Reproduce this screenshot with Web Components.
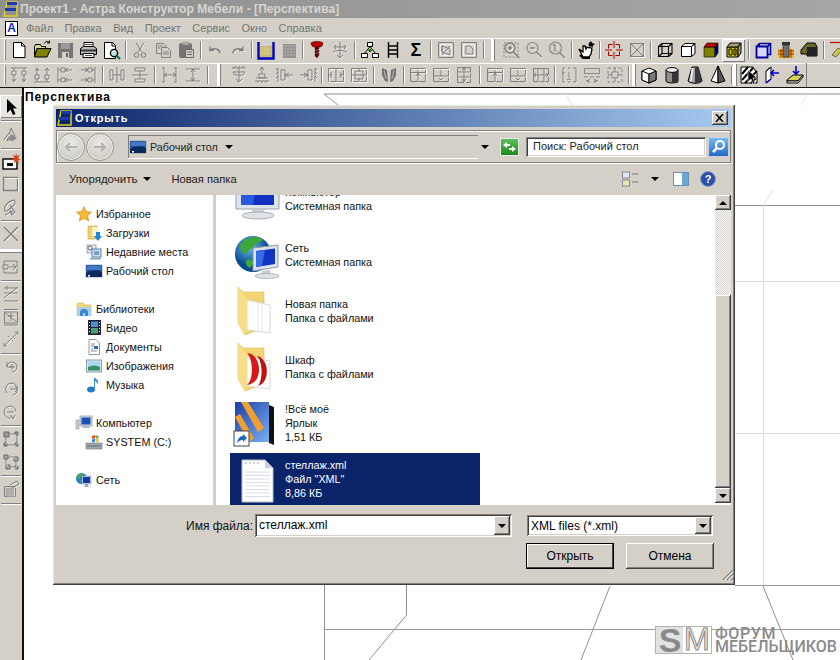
<!doctype html>
<html><head><meta charset="utf-8"><title>Астра</title>
<style>html,body{margin:0;padding:0;background:#fff}body{width:840px;height:660px;overflow:hidden;font:12px "Liberation Sans",sans-serif}</style></head>
<body><x-app></x-app>
<script>
const G='#808080';
const gs=(d,sw=1)=>`<path d="${d}" transform="translate(.8 .8)" fill="none" stroke="#f4f2ee" stroke-width="${sw}"/><path d="${d}" fill="none" stroke="#7c7c7c" stroke-width="${sw}"/>`;
const k=(d,f='none',s='#000',sw=1)=>`<path d="${d}" fill="${f}" stroke="${s}" stroke-width="${sw}"/>`;
const ICONS={
new:k('M4.5 2.5h8l3.5 3.5v11.5H4.5z','#fff')+k('M12.5 2.5V6H16'),
open:k('M2.5 6.5l1-2h5l1 2h4v2H5l-2.5 7z','#d8d88a')+k('M5 8.5h14l-4 8.5H2.5z','#808000')+k('M12 3.5c2-2.5 4-2.5 5.5-.5m0 0v-2.5m0 2.5H15'),
save:'<rect x="3" y="3" width="15" height="15" fill="#757575"/><rect x="6" y="3" width="9" height="6" fill="#9a9a9a"/><rect x="7" y="12" width="7" height="6" fill="#d4d0c8"/><rect x="11" y="13" width="2" height="4" fill="#666"/>',
print:k('M6 2.5h9v5H6z','#fff')+k('M2.5 8.5l3-2h10l3 2v6h-16z','#bcbcbc')+k('M5 13.5h11v4H5z','#fff')+k('M3 10.5h15','none','#333',2)+k('M7 4.5h7M7 15.5h7','none','#555'),
preview:k('M3.5 2.5h8l3 3v13h-11z','#fff')+k('M11 3v3h3')+'<circle cx="13" cy="13" r="3.6" fill="#bfe6e6" stroke="#000" stroke-width="1.4"/>'+k('M15.5 15.5l3.5 3.5','none','#007070',2.2),
cut:gs('M6 2.5l6 10M14 2.5l-6 10')+'<circle cx="6.5" cy="15" r="2.3" fill="none" stroke="#7c7c7c"/><circle cx="13.5" cy="15" r="2.3" fill="none" stroke="#7c7c7c"/>',
copy:k('M3.5 3.5h7l2 2v8h-9z','#d4d0c8',G)+k('M8.5 7.5h6l3 3v7h-9z','#d4d0c8',G)+k('M5 6h5M5 8h2M10 12h6M10 14h6','none',G),
paste:'<rect x="3" y="3" width="13" height="15" rx="2" fill="#757575"/><rect x="6.5" y="1.5" width="6" height="3.5" fill="#a8a8a8"/>'+k('M9.5 9.5h8v8h-8z','#d4d0c8','#666')+k('M11 12h5M11 14.5h5','none','#666'),
undo:gs('M15 13.5c0-4-5-6-9-4M5 6.5v4h4',1.4),
redo:gs('M5 13.5c0-4 5-6 9-4M15 6.5v4h-4',1.4),
bucket:'<rect x="4" y="6" width="12" height="11" fill="#bdb26a"/><path d="M4 8h12M4 10h12M4 12h12M4 14h12M6 6v11M9 6v11M12 6v11" stroke="#e0d890" stroke-width=".7"/>'+k('M2.5 2v16.5h15V2','none','#0000c0',2.4),
hatch:'<rect x="4" y="4" width="13" height="14" fill="#8a8a8a"/><path d="M4 6h13M4 9h13M4 12h13M4 15h13M6 4v14M9 4v14M12 4v14M15 4v14" stroke="#b0b0b0" stroke-width=".8"/>',
screw:'<path d="M4 3c2-2 10-2 12 0l-1 3-2 1H7L5 6z" fill="#c00000" stroke="#400000" stroke-width=".6"/><path d="M8 7h4v2l-4 1.5zM8 11l4-1v2l-4 1.5zM8 14l4-1v2l-2 3-2-2z" fill="#600" stroke="#300" stroke-width=".3"/>',
gear:gs('M10 2v16M4 7h12M6 5l-2 2 2 2M14 5l2 2-2 2M3 12c4-2 10-2 14 0M7 15l3 3 3-3')+'',
tree:k('M7.5 2.5h5v4h-5z','#e8ffe8')+k('M1.5 13.5h6v4h-6zM12.5 13.5h6v4h-6z','#fff')+k('M10 6.5L4.5 13.5M10 6.5l5.5 7')+k('M10 9l1.5 1.5L10 12l-1.5-1.5z','#00a000','#006000'),
ladder:k('M5.5 2v16M14.5 2v16M5.5 6h9M5.5 10h9M5.5 14h9','none','#000',1.4),
sigma:'<text x="10" y="16" text-anchor="middle" font-family="Liberation Sans" font-weight="bold" font-size="18">Σ</text>',
dis1:k('M2.5 2.5h15v15h-15z','#d4d0c8',G)+k('M4.5 4.5h11v11h-11z','none','#f4f2ee')+gs('M6 6l8 3v6l-8-3zM6 6v6M14 6L6 15'),
dis2:k('M2.5 2.5h15v15h-15z','#d4d0c8',G)+k('M4.5 4.5h11v11h-11z','none','#f4f2ee')+gs('M7 6h4l3 3v5H7z'),
zoomfit:'<path d="M3 3h14v14H3z" fill="none" stroke="#888" stroke-dasharray="2 1.5"/>'+'<circle cx="9" cy="8" r="5" fill="#d4d0c8" stroke="#7c7c7c" stroke-width="1.3"/>'+gs('M7 8h4M9 6v4M12.5 12l6 6',1.4),
zoomout:'<circle cx="8.5" cy="8" r="5.5" fill="none" stroke="#8a8a8a" stroke-width="1.2"/>'+gs('M6 8h5M12.5 12l5.5 5',1.3),
zoom1:'<circle cx="8.5" cy="8" r="6" fill="none" stroke="#8a8a8a" stroke-width="1.2"/>'+gs('M8 5v6M6 5h2M12.5 12.5l5.5 5.5',1.3)+k('M5.5 11h6','none','#aaa'),
hand:'<path d="M3 9l4 3V6l2 0 1 3 1-2 2 1 1-1 2 2-1 5-2 3H7z" fill="#fff" stroke="#000" stroke-width="1.3"/><path d="M13 3l2-2 1 2 3 1-2 1.500-.5 2.500-1.500-2-2.500 0z" fill="#000"/><path d="M4 15l3 3h7" stroke="#000" stroke-width="2" fill="none"/>',
target:k('M4.500 4.500h4M11.500 4.500h4M4.500 15.500h4M11.500 15.500h4M4.500 4.500v4M15.500 4.500v4M4.500 11.500v4M15.500 11.500v4','none','#a00000')+k('M10 1v7M10 12v7M1 10h7M12 10h7','none','#c00000'),
boxx:k('M3.500 3.500h13v13h-13z','#d4d0c8',G)+k('M3.500 3.500l13 13M16.500 3.500l-13 13','none',G)+k('M4.500 17.500h13v-13','none','#f4f2ee'),
cube1:k('M3.500 6.500h10v10h-10zM7 3.500h10v10H7zM3.500 6.500L7 3.500M13.500 6.500l3.500-3M13.500 16.500l3.500-3M3.500 16.500l3.500-3','none','#000',1.1),
cube2:k('M3.500 6.500h10v10h-10z','#fff')+k('M3.500 6.500L7 3.500h10l-3.500 3zM13.500 6.500l3.500-3v10l-3.500 3z','#fff'),
cube3:'<path d="M3 7h11v10H3z" fill="#808000" stroke="#000" stroke-width=".6"/><path d="M3 7l3-4h11l-3 4z" fill="#c00000" stroke="#000" stroke-width=".6"/><path d="M14 7l3-4v10l-3 4z" fill="#000090" stroke="#000" stroke-width=".6"/>',
cube4:'<path d="M3 7h11v10H3z" fill="#d8c820" stroke="#000"/><path d="M3 7l3-4h11l-3 4zM14 7l3-4v10l-3 4z" fill="#a8a070" stroke="#000"/><path d="M5 9h3v6H5zM10 9h2v6h-2z" fill="none" stroke="#000"/>',
cube5:k('M3.500 6.500h11v11h-11z','#d8d8ff','#0000a0',1.8)+k('M6.500 3.500h11v11h-3M6.500 3.500l-3 3M17.500 3.500l-3 3','none','#0000a0',1.6)+k('M6.500 3.500v3','none','#000'),
hole:'<rect x="2" y="9" width="16" height="9" fill="#e0c020"/><path d="M2 11h16M2 14h16M5 9v9M8 9v9M12 9v9M15 9v9" stroke="#c00000" stroke-width=".8"/><rect x="7" y="5" width="6" height="12" fill="#707070" stroke="#000" stroke-width=".5"/><rect x="6" y="2" width="8" height="3" fill="#333"/>',
darkbox:'<path d="M2 10l6-7h8l2 4v9H8v-2H2z" fill="#6a6a30" stroke="#000"/><path d="M8 7h10v9H8z" fill="#222"/>',
pencil:k('M2 2.500h14','none','#c00000',1.200)+'<path d="M4 15l6-7 4 2-6 7z" fill="#c8c84a" stroke="#666"/>',
a1:gs('M2 3h16M5 3v3M15 3v3M3 6h4v4H3zM13 6h4v4h-4zM5 10v7M15 10v7M3 14l2 3 2-3M13 14l2 3 2-3'),
a2:gs('M2 17h16M5 17v-3M15 17v-3M3 10h4v4H3zM13 10h4v4h-4zM5 10V3M15 10V3M3 6l2-3 2 3M13 6l2-3 2 3'),
a3:gs('M3 2v16M3 5h3M3 15h3M6 3h4v4H6zM6 13h4v4H6zM10 5h7M10 15h7M13 3l-3 2 3 2M13 13l-3 2 3 2'),
a4:gs('M17 2v16M14 5h3M14 15h3M10 3h4v4h-4zM10 13h4v4h-4zM3 5h7M3 15h7M7 3l3 2-3 2M7 13l3 2-3 2'),
a5:gs('M10 2v16M6 5h-3v10h3zM14 5h3v10h-3zM6 10h4M10 10h4'),
a6:gs('M2 10h16M5 6V3h10v3zM5 14v3h10v-3zM10 6v4M10 10v4'),
a7:gs('M4 3v14M16 3v14M4 10h12M2 3h3M2 17h3M14 3h3M14 17h3M7 8l-3 2 3 2M13 8l3 2-3 2'),
a8:gs('M3 4h14M3 16h14M10 4v12M8 7l2-3 2 3M8 13l2 3 2-3'),
b1:gs('M3 3h14M5 3l2-2M9 3l2-2M13 3l2-2M10 3v6M4 7h12l-2 3H6zM10 10v7M7 14l3 3 3-3'),
b2:gs('M3 16h14M5 18l2-2M9 18l2-2M13 18l2-2M7 9h6v4H7zM10 9V2M8 5l2-3 2 3M4 13h12'),
b3:gs('M3 3v14M1 5l2-2M1 9l2-2M1 13l2-2M6 5h4v10H6zM10 10h8M14 8l-4 2 4 2'),
b4:gs('M17 3v14M19 5l-2-2M19 9l-2-2M19 13l-2-2M10 5h4v10h-4zM2 10h8M6 8l4 2-4 2'),
c1:k('M2.500 3.500h15v13h-15z','none',G)+k('M3.500 4.500h15v13h-15z','none','#f4f2ee')+gs('M10 3v14M5 7v6M15 7v6M3 10h3M14 10h3'),
c2:k('M2.500 3.500h15v13h-15z','none',G)+k('M3.500 4.500h15v13h-15z','none','#f4f2ee')+gs('M3 10h14M6 6h8v8H6zM10 3v4M10 13v4'),
wings:'<path d="M3 3l5 2 1 12-3-1-3-6zM17 3l-5 2-1 12 3-1 3-6z" fill="#707070"/><path d="M5 5l2 9M15 5l-2 9" stroke="#bbb"/>',
d1:k('M2.500 3.500h15v13h-15z','none',G)+gs('M3 7.500h14M10 3v13M8 11l2-3 2 3')+k('M3.500 4.500h15v13','none','#f4f2ee'),
d2:k('M2.500 3.500h15v13h-15z','none',G)+gs('M3 11h14M10 4v7M8 13l2 2 2-2')+k('M3.500 4.500h15v13','none','#f4f2ee'),
d3:k('M3.500 2.500h13v15h-13z','none',G)+gs('M3 7h13M3 12h13M10 3v14M8 5l2-2 2 2M8 14l2 3 2-3'),
e1:k('M2.500 3.500h15v13h-15z','none',G)+gs('M8 4v12M14 7v6M3 10h5M12 10l-2-2M10 10h4'),
e2:k('M2.500 3.500h15v13h-15z','none',G)+gs('M12 4v12M6 7v6M17 10h-5M8 10h-3M10 8l2 2-2 2'),
e3:k('M2.500 3.500h15v13h-15z','none',G)+gs('M7 4v12M13 4v12M3 10h14M5 8l-2 2 2 2M15 8l2 2-2 2'),
f1:gs('M6 3h-2v14h2M14 3h3v14h-3M3 8h3M9 3h2v1M9 17h2v-1M10 7v6M8 15l2-1 2 1'),
f2:k('M2.500 3.500h15v5h-15z','none',G,.9)+gs('M2 12h4M14 12h4M8 12h4M4 16h4M12 16h4M8 14l-3 2 3 2M12 14l3 2-3 2'),
f3:'<path d="M3 3h14v14H3z" fill="none" stroke="#888" stroke-dasharray="3 2"/>'+gs('M7 7h6v6H7zM10 3v4M10 13v4M3 10h4M13 10h4'),
g1:k('M3 6l7-3 7 3v9l-7 3-7-3z','#fff')+'<path d="M3 6l7 3v9l-7-3z" fill="#fff" stroke="#000"/><path d="M17 6l-7 3v9l7-3z" fill="#7a7a7a" stroke="#000"/>',
g2:'<path d="M4 5v11c0 2.600 12 2.600 12 0V5z" fill="#909090" stroke="#000"/><path d="M10 6v12h6V6z" fill="#333"/><ellipse cx="10" cy="5" rx="6" ry="2.400" fill="#eee" stroke="#000"/>',
g3:'<path d="M7 2h6l4 14c-2 3-12 3-14 0z" fill="#a0a0a0" stroke="#000"/><path d="M10 2h3l4 14c-1 1.500-4 2-7 2z" fill="#3a3a3a"/><path d="M7.500 3L6 16" stroke="#eee" stroke-width="2"/>',
g4:k('M10 1L3 16l7 2z','#fff')+k('M10 1l7 15-7 2z','#555'),
h1:'<path d="M2 2h12l4 6v10H2z" fill="#fff" stroke="#000"/><path d="M3 9l6-7M3 15L14 3M6 18L18 6M12 18l6-6" stroke="#000" stroke-width="2"/><path d="M9 5l9 8-4 0 2 5-2 1-2-5-3 3z" fill="#000" stroke="#fff" stroke-width=".6"/>',
h2:k('M4 18V6l5-4v12z','#fff')+k('M4 18l5-4M9 8h8M12 5l-3 3 3 3','none','#0000d0',1.6)+k('M4 6l5-4'),
h3:'<path d="M2 15l6-5h10l-5 6H2z" fill="#d8d060" stroke="#000"/><path d="M2 16h11l5-6v2l-5 6H2z" fill="#fff" stroke="#000"/><path d="M11 1v8M8 6l3 3 3-3" fill="none" stroke="#0000d0" stroke-width="1.600"/>',
cursor:'<path d="M6 2v14l3.500-3.500 2.500 5.500 2.500-1-2.500-5.500H16z" fill="#000"/>',
l1:k('M6 17l4-13 4 8-5 1z','none',G)+'<path d="M10 10l6 4-4 3-5-1z" fill="#8a8a8a"/>'+gs('M3 16l5-7'),
l2:'<rect x="2" y="7" width="14" height="10" fill="#fff" stroke="#000" stroke-width="1.400"/><path d="M15 1l1 3 3-1-2 3 3 2-3 .5 1 3-3-2-2 2 .5-3-3-.5 3-2-2-3 3 1z" fill="#e04020"/><rect x="6" y="11" width="6" height="3" fill="#000"/>',
l3:k('M2.500 3.500h14v13h-14z','none',G,1.300)+k('M3.500 4.500h14v13','none','#f4f2ee'),
l4:gs('M4 14c-2-4 3-10 9-11 2 2 1 5-1 6-4 3-5 6-8 5zM9 8l5 7-3 3-2-5M4 18l8-4',1.100),
l5:gs('M3 3l14 14M17 3L3 17',1.400),
l6:k('M3 4h13v12H3z','none',G)+gs('M8 10h7M12 7l3 3-3 3M2 8h5v4H2z'),
l7:gs('M3 4h14M3 9h14M3 14l14-11M3 17h14M6 2v4',1),
l8:k('M3.500 5h13v11h-13z','none',G)+gs('M3 2.500h14M3 18h14M7 9h6M10 6v8M3 5l14 11'),
l9:gs('M3 17l14-14M14 3h3v3M3 14v3h3M7 7l1 1M11 11l1 1M13 9l1 1',1),
l10:gs('M6 10a5 5 0 1 1 5 5M6 5v5h5M11 7v6M8 10h6'),
l11:gs('M6 14a6 6 0 1 1 6 2M9 10h8M14 7l3 3-3 3'),
l12:gs('M15 9a6 6 0 1 0-5 7M6 10h7M10 13l2 4 2-4'),
l13:k('M3 3h5v5H3zM14 3h3v3h-3zM3 14h3v3H3zM14 14h3v3h-3z','#999','#666')+gs('M8 5h6M5 8v6M16 6v8M6 16h8'),
l14:k('M3 3h4v4H3zM13 5h4v4h-4zM5 13h4v4H5zM14 14h3v3h-3z','#aaa','#666')+gs('M7 5h6M5 7v6M15 9v5M9 15h5'),
l15:k('M3.500 7.500h11v10h-11z','#d4d0c8',G)+gs('M5 10h8M5 12h8M5 14h8M5 16h8M9 6l7-4 2 3-7 4')
};
const SM={
star:'<path d="M8 .8l2.200 4.800 5.300.6-4 3.500 1.200 5.300L8 12.200 3.300 15l1.200-5.300-4-3.500 5.300-.6z" fill="#f6b93a" stroke="#d88a10" stroke-width=".7"/>',
dl:'<path d="M2 1h9v13H2z" fill="#f0d070" stroke="#c8a040" stroke-width=".6"/><path d="M6 2h6v9H6z" fill="#fff3c0"/><path d="M10 7h4v4h2l-4 5-4-5h2z" fill="#1e88d8"/>',
recent:'<rect x="1" y="1" width="9" height="8" fill="#e4e8ec" stroke="#7a8a9a" stroke-width=".7"/><circle cx="4" cy="4" r="2" fill="#fff" stroke="#667"/><rect x="6" y="5" width="9" height="8" fill="#cfe0f0" stroke="#5a80a0"/><rect x="8" y="7" width="5" height="4" fill="#70a0c8"/><path d="M4 14h11v1.500H4z" fill="#90a0b0"/>',
desk:'<rect x="0" y="2" width="16" height="12" fill="#1c4d9a" stroke="#6a84a8" stroke-width=".6"/><path d="M0 10c5-3 11-3 16-1v5H0z" fill="#0a2a60"/><rect x="1" y="3" width="14" height="4" fill="#5a9ae0" opacity=".6"/><rect x="2" y="12" width="2" height="1.500" fill="#fff"/>',
lib:'<path d="M1 4l1-2h5l1 2h7v10H1z" fill="#f4d878" stroke="#d0a840" stroke-width=".6"/><path d="M1 6h14v9H1z" fill="#a8cef0"/><path d="M4 15V11c0-4 8-4 8 0v4h-3v-3H7v3z" fill="#3a88d0"/>',
video:'<rect x="2" y="0" width="13" height="15" fill="#223"/><rect x="5" y="1.500" width="7" height="5.500" fill="#4a90d8"/><rect x="5" y="8" width="7" height="5.500" fill="#4aa070"/><path d="M3 2h1v1H3zM3 5h1v1H3zM3 8h1v1H3zM3 11h1v1H3zM13 2h1v1h-1zM13 5h1v1h-1zM13 8h1v1h-1zM13 11h1v1h-1z" fill="#fff"/>',
docs:'<path d="M3 .5h7l3.500 3.500v11.500H3z" fill="#fff" stroke="#8a9ab0"/><path d="M5 5h4M5 7h3M5 12h6M5 10h2" stroke="#889" /><rect x="8" y="7" width="4" height="3" fill="#2a70c0"/>',
img:'<rect x=".5" y="2" width="15" height="12" fill="#d8e8f4" stroke="#8a9ab0"/><rect x="2" y="3.500" width="12" height="9" fill="#a8d8f0"/><path d="M2 9c4-2 8-2 12 0v3.500H2z" fill="#3a9060"/>',
music:'<ellipse cx="5" cy="12.500" rx="4" ry="3" fill="#2878c8"/><path d="M8 12V.5c3 1.500 5 3.500 4 7-.5-2-2-3-3-3.500V12z" fill="#3a90e0"/>',
comp:'<rect x="4" y="1" width="12" height="10" fill="#cfd8e0" stroke="#7a8a9a" stroke-width=".6"/><rect x="5.500" y="2.500" width="9" height="7" fill="#1c50b8"/><path d="M7 11h6l1 2h-8z" fill="#b0b8c0"/><rect x="0" y="5" width="3" height="9" fill="#c8ccd0" stroke="#889" stroke-width=".5"/>',
drive:'<rect x="0" y="9" width="16" height="6" fill="#a0a8b0" stroke="#707880" stroke-width=".6"/><path d="M1 12h14" stroke="#606870"/><path d="M6 2l3-1v3l-3 1z" fill="#e05030"/><path d="M9.500 1l3 1v3l-3-1z" fill="#60b040"/><path d="M6 5.500l3-1v3l-3 1z" fill="#3080e0"/><path d="M9.500 4.500l3 1v3l-3-1z" fill="#f0c020"/>',
net:'<circle cx="5.500" cy="6.500" r="5.500" fill="#2a80c8"/><path d="M1 4c2-3 6-3 6-1s-3 1-3 3-3 1-3-2zM4 9c2-1 3 0 2 2z" fill="#4aa848"/><rect x="6" y="4" width="9" height="8" fill="#cfd8e8" stroke="#6a7a90" stroke-width=".5"/><rect x="7" y="5" width="7" height="6" fill="#1438a8"/><path d="M9 12h3l.5 3h-4z" fill="#a0a8b0"/>'
};
const BIG={
comp:'<path d="M2 -6h43v40H2z" fill="#dfe4ea" stroke="#98a0ac"/><path d="M7 -6h33v36H7z" fill="#1030c0"/><path d="M7 -6h18l-6 36H7z" fill="#2a58e0"/><path d="M19 34h10l2 4H17z" fill="#c8ccd2"/><ellipse cx="24" cy="40.500" rx="16" ry="3.500" fill="#dfe2e6" stroke="#a8aeb6"/>',
net:'<defs><radialGradient id="gl" cx=".4" cy=".3"><stop offset="0" stop-color="#6ac0f0"/><stop offset="1" stop-color="#084a90"/></radialGradient></defs><circle cx="19" cy="23" r="18" fill="url(#gl)"/><path d="M6 14c5-8 18-10 22-6 2 3-6 3-8 7s-5 2-6 6-8 2-8-7zM12 30c4-3 8-1 7 3l-3 4c-3-1-5-4-4-7z" fill="#3ca83c"/><path d="M19 17l25-3v22l-25 4z" fill="#dbe2ea" stroke="#8a98a8"/><path d="M22 20l19-2.500V33l-19 3z" fill="#0e34c0"/><path d="M22 20l9-1-3 16-6 1z" fill="#3a6ae8"/><path d="M28 40l8-1 1 4H27z" fill="#c8ccd2"/><ellipse cx="33" cy="45" rx="12" ry="2.500" fill="#dfe2e6" stroke="#b0b6bc"/>',
folder:'<path d="M4 0l5 5h21v36l-19 7-7-12z" fill="#f2d676" stroke="#d8b850" stroke-width=".6"/><path d="M13 13l23 5v28l-23-3z" fill="#fff" stroke="#d8d8d8"/><path d="M24 15v30M28 16v29" stroke="#e4e4e4"/><path d="M4 0l9 13v30l-2 5-7-12z" fill="#f6de8a"/>',
folderR:'<path d="M4 0l5 5h21v36l-19 7-7-12z" fill="#f2d676" stroke="#d8b850" stroke-width=".6"/><path d="M13 13l23 5v28l-23-3z" fill="#fff" stroke="#d8d8d8"/><path d="M4 0l9 13v30l-2 5-7-12z" fill="#f6de8a"/><path d="M13 10c14 0 18 30 0 32 7-6 6-26 0-32z" fill="#d81818"/><path d="M23 13c12 2 14 26 1 30 5-6 5-24-1-30z" fill="#c01010"/>',
link:'<defs><linearGradient id="lk" x1="0" x2="1" y1="0" y2="1"><stop offset="0" stop-color="#1a3ea8"/><stop offset="1" stop-color="#7ab0f0"/></linearGradient></defs><path d="M35 6l5 2v38l-5-2z" fill="#111"/><path d="M1 3h34v40H1z" fill="url(#lk)"/><path d="M7 3h7l16 26-6 4zM1 18l5-3 14 24-5 4z" fill="#f0a030"/><rect x="0" y="32" width="15" height="15" fill="#fff" stroke="#445"/><path d="M3 44c1-5 3-7 6-7v-2l4 4-4 4v-2c-3 0-4 1-6 3z" fill="#1a68c0"/>',
xml:'<path d="M8 5h23l8 8v34H8z" fill="#fff" stroke="#b8c0cc"/><path d="M31 5v8h8z" fill="#c8d0dc"/><path d="M11 17h25M11 20.500h25M11 24h25M11 27.500h25M11 31h25M11 34.500h25M11 38h25M11 41.500h25" stroke="#ccd6e4" stroke-width=".8"/><path d="M11 8h2M15 8h2M19 8h2M23 8h2" stroke="#99a"/>'
};
function def(name,fn){customElements.define(name,class extends HTMLElement{
  connectedCallback(){if(this.shadowRoot)return;const s=this.attachShadow({mode:'open'});s.innerHTML=fn(this)}})}
const raised='box-shadow:inset -1px -1px #404040,inset 1px 1px #fff,inset -2px -2px #808080;background:#d4d0c8';
const sunken='box-shadow:inset 1px 1px #808080,inset -1px -1px #fff,inset 2px 2px #404040,inset -2px -2px #d4d0c8;background:#fff';

def('x-ic',e=>{const n=e.getAttribute('n'),act=e.hasAttribute('on');
  return `<style>:host{display:flex;width:${e.getAttribute('w')||23}px;height:${e.getAttribute('h')||23}px;align-items:center;justify-content:center;flex:none}svg{display:block;overflow:visible}
  ${act?':host{box-shadow:inset 1px 1px #fff,inset -1px -1px #808080;background:#e8e6e0}':''}</style><svg width="20" height="20" viewBox="0 0 20 20">${ICONS[n]||''}</svg>`});
def('x-small',e=>`<style>:host{display:block;width:16px;height:16px;flex:none}svg{display:block;overflow:visible}</style><svg width="16" height="16" viewBox="0 0 16 16">${SM[e.getAttribute('n')]}</svg>`);
def('x-big',e=>`<style>:host{display:block;width:48px;height:48px;flex:none}svg{display:block;overflow:visible}</style><svg width="48" height="48" viewBox="0 0 48 48">${BIG[e.getAttribute('n')]}</svg>`);
def('x-caret',e=>{const c=e.getAttribute('dir')||'down';return `<style>:host{display:block;flex:none;width:0;height:0;border:4px solid transparent;${c=='down'?'border-top:4px solid #000;border-bottom:0':'border-bottom:4px solid #000;border-top:0'}}</style>`});

def('x-titlebar',e=>`<style>:host{display:flex;height:18px;align-items:center;background:linear-gradient(90deg,#8f8f8f,#a6a6a6);color:#d8d6d0;font:bold 12px "Liberation Sans",sans-serif;letter-spacing:.06px;white-space:nowrap;flex:none}
 svg{margin:0 2px 0 3px}</style><svg width="15" height="16" viewBox="0 0 15 16"><path d="M4 1h10v14H1z" fill="none" stroke="#e0d020" stroke-width="1.500"/><path d="M2 7h11v3H2z" fill="#1a3ab0"/><path d="M4 1h10v3H4z" fill="#1a3ab0"/></svg><slot></slot>`);
def('x-menubar',e=>`<style>:host{display:flex;height:20px;align-items:center;background:#d4d0c8;color:#77756f;font:11px "Liberation Sans",sans-serif;flex:none;padding-left:5px;box-sizing:border-box}
 .lg{width:13px;height:15px;background:#fff;border:1px solid #000;box-sizing:border-box;color:#1a2ac0;font:bold 12px/13px "Liberation Sans";text-align:center;margin-right:8px}
 ::slotted(span){margin-right:11.500px}</style><div class="lg">A</div><slot></slot>`);
def('x-sep',e=>{const w=e.getAttribute('w')||6;return `<style>:host{display:flex;justify-content:center;width:${w}px;flex:none;align-self:stretch}i{display:block;width:1px;margin:3px 0;background:#808080;box-shadow:1px 0 #fff}</style><i></i>`});
def('x-grip',e=>`<style>:host{display:flex;width:${e.getAttribute('w')||8}px;flex:none;align-self:stretch;justify-content:center}i{display:block;width:1px;background:#808080;border-left:3px solid #fff;margin:1px 0}</style><i></i>`);
def('x-toolbar',e=>{const t=e.getAttribute('items').trim().split(/\s+/);
  const html=t.map(x=>x[0]=='|'?`<x-sep w="${x.slice(1)||6}"></x-sep>`:x[0]=='#'?`<x-grip w="${x.slice(1)}"></x-grip>`:x[0]=='*'?`<x-ic n="${x.slice(1)}" on></x-ic>`:`<x-ic n="${x}"></x-ic>`).join('');
  return `<style>:host{display:block;flex:none;height:24px;background:#d4d0c8;overflow:hidden}
  .r{display:flex;align-items:center;height:24px;padding-left:7px;box-sizing:border-box;box-shadow:inset 0 1px #fff;position:relative}
  .r:before{content:"";position:absolute;left:5px;top:2px;bottom:2px;width:1px;background:#808080;box-shadow:-1px 0 #fff}
  .e{position:absolute;left:${e.getAttribute('end')||9999}px;top:0;bottom:0;width:1px;background:#808080}</style><div class="r">${html}<div class="e"></div></div>`});
def('x-lefttools',e=>{const t=e.getAttribute('items').trim().split(/\s+/);
  const html=t.map(x=>x[0]=='|'?`<div class="s"></div>`:x=='#'?`<div class="g"></div>`:x[0]=='*'?`<x-ic n="${x.slice(1)}" h="23" w="22" on></x-ic>`:`<x-ic n="${x}" w="22" h="22.500"></x-ic>`).join('');
  return `<style>:host{display:flex;flex-direction:column;width:24px;flex:none;background:#d4d0c8;box-sizing:border-box;border-right:2px solid #111;padding-top:7px}
  .s{height:1px;background:#808080;box-shadow:0 1px #fff;margin:2px 1px 2px}.g{height:3px;background:#fff;border-bottom:1px solid #808080;margin:3px 0 3px}</style>${html}`});
def('x-canvas',e=>`<style>:host{display:block;position:relative;flex:1;background:#fff;overflow:hidden}
  .t{font:bold 12px "Liberation Sans",sans-serif;letter-spacing:.85px;color:#000;padding:2px 0 0 1px}svg{position:absolute;left:0;top:0}</style>
  <svg width="816" height="572" viewBox="24 88 816 572"><g fill="none" stroke-width="1">
  <path d="M324 94H840" stroke="#8f8f8f"/><path d="M324 94L338 105" stroke="#9a9a9a"/><path d="M565 94l7 11M808 94l-8 11" stroke="#e4e4e4"/>
  <path d="M735 205.500H840" stroke="#8f8f8f"/><path d="M735 281.500H840M735 433.500H840M763.500 205V586" stroke="#dcdcdc"/><path d="M763 205l10-15" stroke="#e6e6e6"/>
  <path d="M735 585.500H840" stroke="#999"/><path d="M324.500 585V660M406.500 585V615M406.500 615L369 660M610 586L581 660M763 586L793 660" stroke="#8f8f8f"/><path d="M324 629.500H840" stroke="#999"/></g></svg>
  <div class="t">Перспектива</div><slot></slot>`);
def('x-logo',e=>`<style>:host{position:absolute;left:631px;top:538px;display:flex;color:#8b8b8b;align-items:flex-start}
  .m{width:57px;height:28px;display:flex;box-sizing:border-box;border:1px solid #b4b4b4;background:linear-gradient(90deg,#e2e2e2 50%,#fff 50%);font:bold 34px/26px "Liberation Sans";overflow:visible}
  .s{color:#8a8a8a;width:28px;text-align:center}.n{font-size:31px;font-weight:400;color:#e8e8e8;-webkit-text-stroke:1px #8a8a8a}
  .x{font:500 16px/13px Roboto,"Liberation Sans";margin-left:3px;padding-top:1px}.x div:first-child{letter-spacing:.6px}</style>
  <div class="m"><span class="s">S</span><span class="n">M</span></div><div class="x"><div>ФОРУМ</div><div>МЕБЕЛЬЩИКОВ</div></div>`);
def('x-winbtn',e=>`<style>:host{display:flex;align-items:center;justify-content:center;width:${e.getAttribute('w')||16}px;height:${e.getAttribute('h')||15}px;flex:none;${raised}}</style><slot></slot>`);
def('x-combo',e=>`<style>:host{display:flex;box-sizing:border-box;width:${e.getAttribute('w')}px;height:${e.getAttribute('h')||22}px;${sunken};padding:2px;align-items:stretch;font-size:12px;color:#000;flex:none}
  .v{flex:1;padding:1px 2px;white-space:nowrap;line-height:17px}.b{width:16px;display:flex;align-items:center;justify-content:center;${raised}}</style><div class="v"><slot></slot></div><div class="b"><x-caret></x-caret></div>`);
def('x-button',e=>`<style>:host{display:flex;align-items:center;justify-content:center;box-sizing:border-box;width:88px;height:26px;flex:none;${e.hasAttribute('def')?'box-shadow:inset 0 0 0 1px #000,inset -2px -2px #404040,inset 2px 2px #fff;background:#d4d0c8':raised};color:#000}</style><slot></slot>`);
def('x-tree-row',e=>`<style>:host{display:flex;align-items:center;gap:4px;height:19px;padding-left:${e.hasAttribute('sub')?30:20}px;white-space:nowrap;color:#111;font-size:10.800px}</style><x-small n="${e.getAttribute('i')}"></x-small><slot></slot>`);
def('x-tree',e=>`<style>:host{display:block;width:157px;flex:none;background:#fff;padding-top:9px;box-sizing:border-box;overflow:hidden}::slotted(.gap){height:19px}</style><slot></slot>`);
def('x-file',e=>{const sel=e.hasAttribute('sel');return `<style>:host{display:flex;box-sizing:border-box;height:52px;margin:2px 0;width:250px;align-items:center;padding-left:4px;gap:3px;flex:none;font-size:10.800px;${sel?'background:#0a246a;color:#fff':'color:#111'}}
  .t{line-height:14px;white-space:nowrap}</style><x-big n="${e.getAttribute('i')}"></x-big><div class="t"><slot></slot></div>`});
def('x-filelist',e=>`<style>:host{display:block;flex:1;background:#fff;overflow:hidden;padding-left:14px;min-width:0}.in{margin-top:-24px;display:flex;flex-direction:column}</style><div class="in"><slot></slot></div>`);
def('x-scroll',e=>`<style>:host{display:flex;flex-direction:column;width:16px;flex:none;background:#fff}
  .t{height:85px;background:repeating-conic-gradient(#d4d0c8 0 25%,#fff 0 50%) 0 0/2px 2px}.th{height:193px;${raised}}
  .sp{height:2px;background:#fff}</style><x-winbtn><x-caret dir="up"></x-caret></x-winbtn><div class="t"></div><div class="th"></div><x-winbtn><x-caret></x-caret></x-winbtn>`);
def('x-nav',e=>`<style>:host{display:flex;align-items:center;height:33px;margin-top:3px;box-sizing:border-box;flex:none;box-shadow:inset 0 0 0 1px #808080,inset 1px 1px #808080,inset 2px 2px #fff,0 1px #fff;color:#222}
  .c{width:28px;height:28px;margin-left:1px;border-radius:50%;box-sizing:border-box;border:1px solid #9a9890;background:radial-gradient(circle at 50% 35%,#eceae6,#c4c2bc);display:flex;align-items:center;justify-content:center;color:#bbb;box-shadow:inset 0 0 0 1px #f4f2ee}
  .c:first-child{margin-left:3px}
  .ad{display:flex;align-items:center;width:350px;height:23px;margin-left:14px;box-sizing:border-box;padding-left:2px;gap:4px;box-shadow:inset 1px 1px #808080,0 1px #fff;flex:none;white-space:nowrap;font-size:10.800px}
  .ad x-caret{margin-left:3px}.cr{margin-left:3px}
  .gr{width:19px;height:18px;margin-left:11px;background:linear-gradient(#5cc05c,#1a8a1a);border:1px solid #e8e8e8;box-sizing:border-box;flex:none;display:flex;align-items:center;justify-content:center}
  .sr{width:180px;height:20px;margin-left:7px;box-sizing:border-box;${sunken};padding-left:7px;line-height:19px;flex:none;color:#222;white-space:nowrap;font-size:11px}
  .go{width:21px;height:20px;margin-left:2px;background:linear-gradient(#7ab8f0,#2468c8);border:1px solid #c8d4e4;box-sizing:border-box;display:flex;align-items:center;justify-content:center;flex:none}</style>
  <div class="c"><svg width="14" height="10" viewBox="0 0 14 10"><path d="M13 5H2M6 1L2 5l4 4" fill="none" stroke="#b4b2ac" stroke-width="2"/></svg></div><div class="c"><svg width="14" height="10" viewBox="0 0 14 10"><path d="M1 5h11M8 1l4 4-4 4" fill="none" stroke="#b4b2ac" stroke-width="2"/></svg></div>
  <div class="ad"><x-small n="desk"></x-small><span>Рабочий стол</span><x-caret></x-caret></div><x-caret class="cr"></x-caret>
  <div class="gr"><svg width="15" height="12" viewBox="0 0 15 12"><path d="M1 4l4-3v2h3v2H5v2zM14 8l-4 3V9H7V7h3V5z" fill="#fff"/></svg></div>
  <div class="sr">Поиск: Рабочий стол</div>
  <div class="go"><svg width="15" height="15" viewBox="0 0 15 15"><circle cx="9" cy="6" r="4" fill="none" stroke="#fff" stroke-width="2"/><path d="M6 9l-4 4" stroke="#fff" stroke-width="2.500"/></svg></div>`);
def('x-dtools',e=>`<style>:host{display:flex;align-items:center;height:32px;flex:none;color:#222;white-space:nowrap}
  .a{margin-left:13px}x-caret{margin-left:6px}.b{margin-left:20px;font-size:11.200px}.sp{flex:1}
  .vw{display:flex;align-items:center;margin-right:15px}</style>
  <span class="a">Упорядочить</span><x-caret></x-caret><span class="b">Новая папка</span><span class="sp"></span>
  <div class="vw"><svg width="16" height="16" viewBox="0 0 16 16" style="margin-right:13px"><rect x=".5" y="1" width="7" height="6" fill="#dfe8f0" stroke="#889"/><rect x=".5" y="9" width="7" height="6" fill="#e8e8b0" stroke="#889"/><path d="M10 3h6M10 11h6" stroke="#777"/></svg><x-caret style="margin:0 14px 0 0"></x-caret>
  <svg width="16" height="14" viewBox="0 0 16 14" style="margin-right:11px"><rect x=".5" y=".5" width="15" height="13" fill="#fff" stroke="#6a90b8"/><rect x="9" y="1" width="6" height="12" fill="#6aa8d8"/></svg>
  <svg width="16" height="16" viewBox="0 0 16 16"><circle cx="8" cy="8" r="7.500" fill="#2a50a8" stroke="#8aa0c8"/><text x="8" y="12" text-anchor="middle" font-family="Liberation Sans" font-weight="bold" font-size="11" fill="#fff">?</text></svg></div>`);
def('x-dfoot',e=>`<style>:host{display:flex;flex-direction:column;height:76px;flex:none;position:relative;color:#111;padding-top:9px;box-sizing:border-box;font-size:12px}
  .r1{display:flex;align-items:center;padding-left:130px;height:23px}.l{width:69px;white-space:nowrap}
  .r2{display:flex;gap:12px;justify-content:flex-end;padding-right:17px;margin-top:6px}
  x-combo.f{margin-left:15px}.gp{position:absolute;right:-3px;bottom:0}</style>
  <div class="r1"><span class="l">Имя файла:</span><x-combo w="257" h="23">стеллаж.xml</x-combo><x-combo class="f" w="186" h="21">XML files (*.xml)</x-combo></div>
  <div class="r2"><x-button def>Открыть</x-button><x-button>Отмена</x-button></div>
  <svg class="gp" width="13" height="13" viewBox="0 0 13 13"><path d="M12 2L2 12M12 6l-6 6M12 10l-2 2" stroke="#808080" stroke-width="1.400"/><path d="M12 3.500L3.500 12M12 7.500L7.500 12" stroke="#fff"/></svg>`);
def('x-dialog',e=>`<style>:host{position:absolute;left:29px;top:17px;width:682px;height:480px;box-sizing:border-box;padding:4px 4px 4px 3px;background:#d4d0c8;box-shadow:inset -1px -1px #404040,inset 1px 1px #e8e6e0,inset -2px -2px #808080;display:flex;flex-direction:column;font:11.500px "Liberation Sans",sans-serif;color:#222}
  .ti{height:18px;flex:none;display:flex;align-items:center;background:linear-gradient(90deg,#0a246a,#a6caf0);color:#fff;font:bold 11px "Liberation Sans",sans-serif;letter-spacing:.8px}
  .ti svg{margin:0 3px 0 1px}.ti span{flex:1}.ti x-winbtn{margin-right:3px;height:14px}
  .ct{display:flex;height:310px;flex:none}.sp{width:3px;flex:none;background:#d4d0c8}</style>
  <div class="ti"><svg width="15" height="16" viewBox="0 0 15 16"><path d="M4 1h10v14H1z" fill="none" stroke="#e0d020" stroke-width="1.500"/><path d="M2 7h11v3H2z" fill="#1a3ab0"/><path d="M4 1h10v3H4z" fill="#1a3ab0"/></svg><span>Открыть</span>
  <x-winbtn><svg width="9" height="8" viewBox="0 0 9 8"><path d="M1 0l7 8M8 0L1 8" stroke="#000" stroke-width="1.500"/></svg></x-winbtn></div>
  <x-nav></x-nav><x-dtools></x-dtools>
  <div class="ct"><x-tree>
   <x-tree-row i="star">Избранное</x-tree-row><x-tree-row sub i="dl">Загрузки</x-tree-row><x-tree-row sub i="recent">Недавние места</x-tree-row><x-tree-row sub i="desk">Рабочий стол</x-tree-row><div class="gap"></div>
   <x-tree-row i="lib">Библиотеки</x-tree-row><x-tree-row sub i="video">Видео</x-tree-row><x-tree-row sub i="docs">Документы</x-tree-row><x-tree-row sub i="img">Изображения</x-tree-row><x-tree-row sub i="music">Музыка</x-tree-row><div class="gap"></div>
   <x-tree-row i="comp">Компьютер</x-tree-row><x-tree-row sub i="drive">SYSTEM (C:)</x-tree-row><div class="gap"></div>
   <x-tree-row i="net">Сеть</x-tree-row></x-tree>
   <div class="sp"></div>
   <x-filelist>
    <x-file i="comp">Компьютер<br>Системная папка</x-file>
    <x-file i="net">Сеть<br>Системная папка</x-file>
    <x-file i="folder">Новая папка<br>Папка с файлами</x-file>
    <x-file i="folderR">Шкаф<br>Папка с файлами</x-file>
    <x-file i="link">!Всё моё<br>Ярлык<br>1,51 КБ</x-file>
    <x-file i="xml" sel>стеллаж.xml<br>Файл "XML"<br>8,86 КБ</x-file>
   </x-filelist><x-scroll></x-scroll></div>
  <x-dfoot></x-dfoot>`);
def('x-app',e=>`<style>:host{display:flex;flex-direction:column;width:840px;height:660px;overflow:hidden;font:12px "Liberation Sans",sans-serif}
  .gapl{height:1px;background:#d4d0c8;flex:none}.bl{height:1px;flex:none;background:#111}.mn{display:flex;flex:1;min-height:0}</style>
  <x-titlebar>Проект1 - Астра Конструктор Мебели - [Перспектива]</x-titlebar>
  <x-menubar><span>Файл</span><span>Правка</span><span>Вид</span><span>Проект</span><span>Сервис</span><span>Окно</span><span>Справка</span></x-menubar>
  <x-toolbar items="new open save print preview | cut copy paste | undo redo |5 bucket hatch |5 screw gear |7 tree ladder sigma |7 dis1 dis2 |6 #13 zoomfit zoomout zoom1 | hand |5 target boxx |5 cube1 cube2 cube3 *cube4 | cube5 hole darkbox | pencil"></x-toolbar>
  <div class="gapl"></div>
  <x-toolbar end="806" items="a1 a2 a3 a4 | a5 a6 |7 a7 a8 |6 #17 b1 b2 b3 b4 |5 c1 c2 |7 wings |6 d1 d2 d3 |8 d1 d2 e3 |5 f1 f2 f3 |4 #7 g1 g2 g3 g4 |4 #4 h1 h2 h3"></x-toolbar>
  <div class="bl"></div>
  <div class="mn"><x-lefttools items="*cursor | l1 | l2 l3 l4 | l5 # l6 | l7 l8 l9 | l10 l11 l12 | l13 l14 | l15 |"></x-lefttools>
  <x-canvas><x-dialog></x-dialog><x-logo></x-logo></x-canvas></div>`);
</script></body></html>
